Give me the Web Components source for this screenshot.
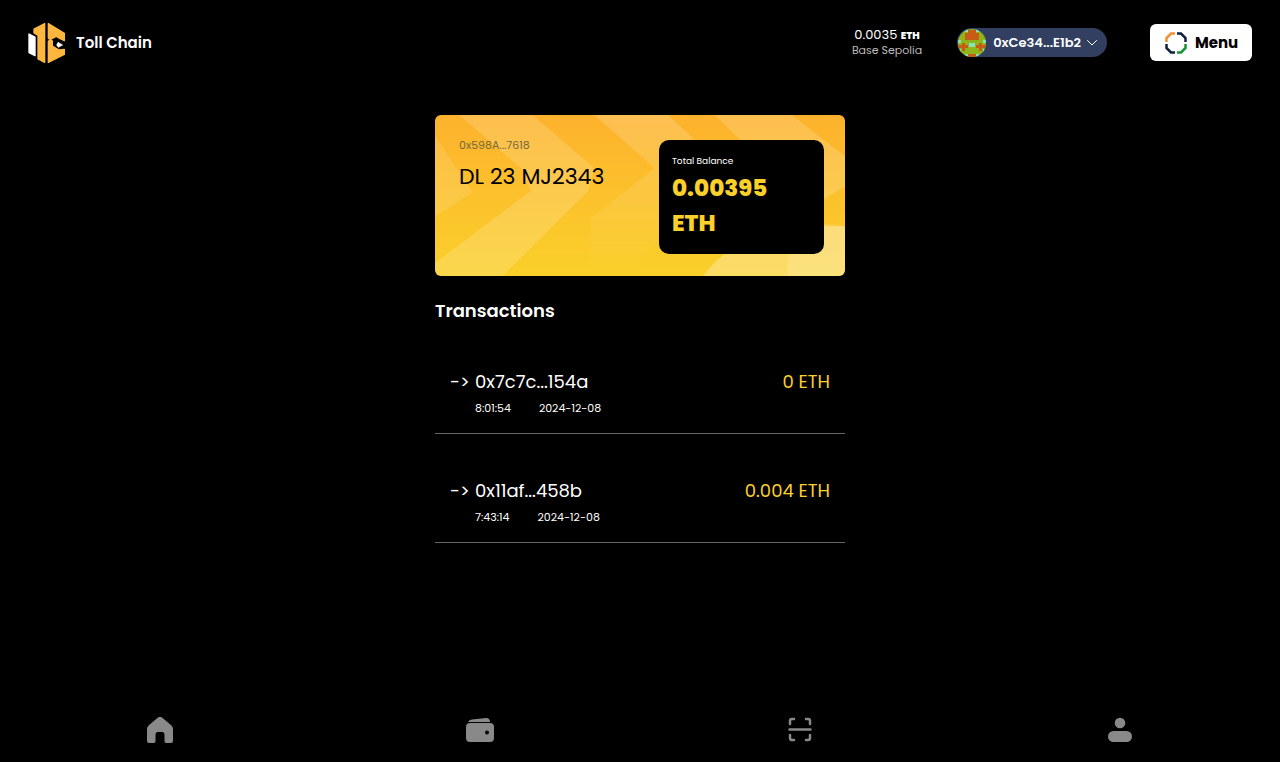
<!DOCTYPE html>
<html lang="en">
<head>
<meta charset="utf-8">
<meta name="viewport" content="width=device-width, initial-scale=1">
<title>Toll Chain</title>
<style>
html, body { margin: 0; background: #000; }
body { font-family: Poppins, Inter, sans-serif; color: #fff; }
</style>
</head>
<body>
<toll-app></toll-app>
<script>
function define(name, html) {
  const template = document.createElement('template');
  template.innerHTML = html;
  customElements.define(name, class extends HTMLElement {
    constructor() {
      super();
      this.attachShadow({ mode: 'open' }).append(template.content.cloneNode(true));
    }
  });
}

define('toll-logo', `
<style>
:host { display: block; }
a { display: flex; align-items: center; gap: 11px; color: #fff; text-decoration: none; font-size: 15px; line-height: 20px; font-weight: 600; }
svg { display: block; }
</style>
<a href="#home">
<svg width="37" height="40" viewBox="54 38 111 120" aria-hidden="true">
<path fill="#fff" stroke="#fff" stroke-width="4" stroke-linejoin="round" d="M57 71L75 80V136L57 127Z"/>
<path fill="#fdb73e" stroke="#fdb73e" stroke-width="4" stroke-linejoin="round" d="M72 56L104 40V156L84 146V75L72 68ZM115 40L163 69V91L149 84L139 78L121 87L115 84ZM115 93L122 88L127 92V107L147 119L163 117V132L115 156Z"/>
<path fill="#fff" stroke="#fff" stroke-width="2" stroke-linejoin="round" d="M144 96L158 104L145 111L140 104Z"/>
</svg><span>Toll Chain</span></a>`);

define('network-balance', `
<style>
:host { display: block; text-align: center; line-height: 15px; }
.amount { font-size: 13px; }
b { font-size: 10px; font-weight: 800; }
.network { font-size: 11px; color: #bbb; }
</style>
<div class="amount">0.0035 <b>ETH</b></div><div class="network">Base Sepolia</div>`);

define('account-pill', `
<style>
:host { display: block; }
button { display: flex; align-items: center; gap: 6px; height: 29px; margin: 0; padding: 0 10px 0 1px; border: 0; border-radius: 15px; background: #323f61; color: #fff; font: 600 13px/18px Poppins, Inter, sans-serif; }
svg { display: block; }
.face { border-radius: 50%; margin-right: 1px; }
</style>
<button type="button">
<svg class="face" width="28" height="28" viewBox="0 0 28 28" shape-rendering="crispEdges" aria-hidden="true">
<path fill="#8fb51b" d="M0 0H28V28H0Z"/>
<path fill="#c75d15" d="M10 1H18V4H21V11H7V4H10ZM4 14H7V16H10V19H7V22H4V19H0V16H4ZM21 14H24V16H28V19H24V22H21V19H18V16H21ZM10 25H18V28H10Z"/>
<path fill="#83e3bd" d="M11 14H17V18H11ZM0 11H3V14H0ZM25 11H28V14H25ZM7 0H10V3H7ZM18 0H21V3H18ZM0 20H3V23H0ZM25 20H28V23H25ZM7 25H10V28H7ZM18 25H21V28H18Z"/>
</svg><span>0xCe34...E1b2</span>
<svg width="10" height="6" viewBox="0 0 10 6" fill="none" stroke="#fff" stroke-linecap="round" aria-hidden="true"><path d="M.5 .5L5 5L9.500 .5"/></svg>
</button>`);

define('menu-button', `
<style>
:host { display: block; }
button { display: flex; align-items: center; justify-content: center; gap: 7px; width: 102px; height: 37px; margin: 0; padding: 0; border: 0; border-radius: 6px; background: #fff; color: #000; font: 700 15px/20px Poppins, Inter, sans-serif; }
svg { display: block; }
</style>
<button type="button">
<svg width="24" height="24" viewBox="0 0 24 24" fill="none" stroke-width="2.500" aria-hidden="true">
<path stroke="#f59132" d="M2.500 11V7L7 2.500H11"/>
<path stroke="#14213d" d="M13 2.500H17L21.500 7V11M2.500 13V17L7 21.500H11"/>
<path stroke="#169333" d="M21.500 13V17L17 21.500H13"/>
</svg>Menu</button>`);

define('app-header', `
<style>
:host { display: flex; align-items: center; justify-content: space-between; height: 85px; padding: 0 28px; }
.account { display: flex; align-items: center; }
network-balance { margin-right: 35px; }
account-pill { margin-right: 43px; }
</style>
<toll-logo></toll-logo>
<div class="account"><network-balance></network-balance><account-pill></account-pill><menu-button></menu-button></div>`);

define('vehicle-card', `
<style>
:host { display: block; position: relative; overflow: hidden; border-radius: 6px; background: linear-gradient(#fdb22d, #fad02a); color: #000; }
.pattern { position: absolute; inset: 0; width: 100%; height: 100%; }
.content { position: relative; display: flex; justify-content: space-between; align-items: flex-start; padding: 25px 21px 22px 24px; }
.address { margin-top: -4px; font-size: 11px; line-height: 18px; color: #75683c; }
.plate { margin-top: 7px; font-size: 22px; line-height: 32px; }
.balance { box-sizing: border-box; width: 165px; height: 114px; padding: 13px; border-radius: 10px; background: #000; color: #fff; }
.label { font-size: 9px; line-height: 16px; }
.value { margin-top: 2px; font-size: 23px; line-height: 35px; font-weight: 800; color: #fbd02a; }
</style>
<svg class="pattern" viewBox="33 30 1226 484" preserveAspectRatio="none" aria-hidden="true">
<defs><linearGradient id="fade" x1="0" y1="0" x2="0" y2="1"><stop stop-color="#fff" stop-opacity=".18"/><stop offset="1" stop-color="#fff" stop-opacity="0"/></linearGradient></defs>
<g fill="#fff">
<path opacity=".12" d="M33 92L145 262L33 335Z"/>
<path opacity=".16" d="M105 30H325L510 190L490 260L235 514H33V475L320 258L290 190Z"/>
<path fill="url(#fade)" d="M510 30H730L900 190L600 514H500V340L690 190Z"/>
<path opacity=".17" d="M870 30H1100L1259 155V245L1150 310Z"/>
<path opacity=".28" d="M835 514Q950 350 1259 365V514Z"/>
<path opacity=".15" d="M1088 514Q1080 430 1130 365Q1190 350 1259 365V514Z"/>
</g>
</svg>
<div class="content">
<div><div class="address">0x598A...7618</div><div class="plate">DL 23 MJ2343</div></div>
<div class="balance"><div class="label">Total Balance</div><div class="value">0.00395 ETH</div></div>
</div>`);

define('transaction-row', `
<style>
:host { display: block; padding: 43px 15px 16px; border-bottom: 1px solid #666; }
.main { display: flex; gap: 6px; font-size: 18px; line-height: 27px; }
.arrow { width: 19px; white-space: nowrap; }
.amount { margin-left: auto; color: #fbd02a; }
.when { display: flex; gap: 28px; margin-top: 4px; padding-left: 25px; font-size: 11px; line-height: 18px; }
</style>
<div class="main"><span class="arrow">-&gt;</span><slot name="hash"></slot><span class="amount"><slot name="amount"></slot></span></div>
<div class="when"><slot name="time"></slot><slot name="date"></slot></div>`);

define('bottom-nav', `
<style>
:host { display: block; }
nav { display: grid; grid-template-columns: repeat(4, 1fr); height: 65px; }
a { display: flex; align-items: center; justify-content: center; color: #898989; }
svg { display: block; }
</style>
<nav aria-label="Main">
<a href="#home" aria-label="Home"><svg width="28" height="28" viewBox="0 0 28 28"><path fill="currentColor" d="M12 1.500Q14 0 16 1.500L25.500 9.500Q27 11 27 13V25Q27 27 25 27H20Q18.500 27 18.500 25V19Q18.500 16 16 16H12Q9.500 16 9.500 19V25Q9.500 27 8 27H3Q1 27 1 25V13Q1 11 2.500 9.500Z"/></svg></a>
<a href="#wallet" aria-label="Wallet"><svg width="28" height="28" viewBox="0 0 28 28"><path fill="currentColor" d="M2 6Q3 4 6 3.600L20 2Q23 1.500 24 5V6ZM4 7H24Q28 7 28 11V22Q28 26 24 26H4Q0 26 0 22V11Q0 7 4 7Z"/><circle cx="21" cy="16.500" r="2" fill="#000"/></svg></a>
<a href="#scan" aria-label="Scan"><svg width="24" height="26" viewBox="0 0 24 26" fill="none" stroke="currentColor" stroke-width="2.500" stroke-linecap="round" stroke-linejoin="round"><path d="M2 7V4Q2 2 4 2H6M18 2H20Q22 2 22 4V7M2 18V21Q2 23 4 23H6M18 23H20Q22 23 22 21V18M1.500 12.500H22.500"/></svg></a>
<a href="#profile" aria-label="Profile"><svg width="24" height="26" viewBox="0 0 24 26" fill="currentColor"><circle cx="12" cy="6" r="5.300"/><rect x="0" y="14" width="24" height="11" rx="5.500"/></svg></a>
</nav>`);

define('toll-app', `
<style>
:host { display: flex; flex-direction: column; min-height: 100vh; }
main { flex: 1; box-sizing: border-box; width: 32%; min-width: 410px; margin: 0 auto; padding-top: 30px; }
h1 { margin: 21px 0 0; font-size: 18px; line-height: 28px; font-weight: 600; }
</style>
<app-header></app-header>
<main>
<vehicle-card></vehicle-card>
<h1>Transactions</h1>
<transaction-row><span slot="hash">0x7c7c...154a</span><span slot="amount">0 ETH</span><span slot="time">8:01:54</span><span slot="date">2024-12-08</span></transaction-row>
<transaction-row><span slot="hash">0x11af...458b</span><span slot="amount">0.004 ETH</span><span slot="time">7:43:14</span><span slot="date">2024-12-08</span></transaction-row>
</main>
<bottom-nav></bottom-nav>`);
</script>
</body>
</html>
